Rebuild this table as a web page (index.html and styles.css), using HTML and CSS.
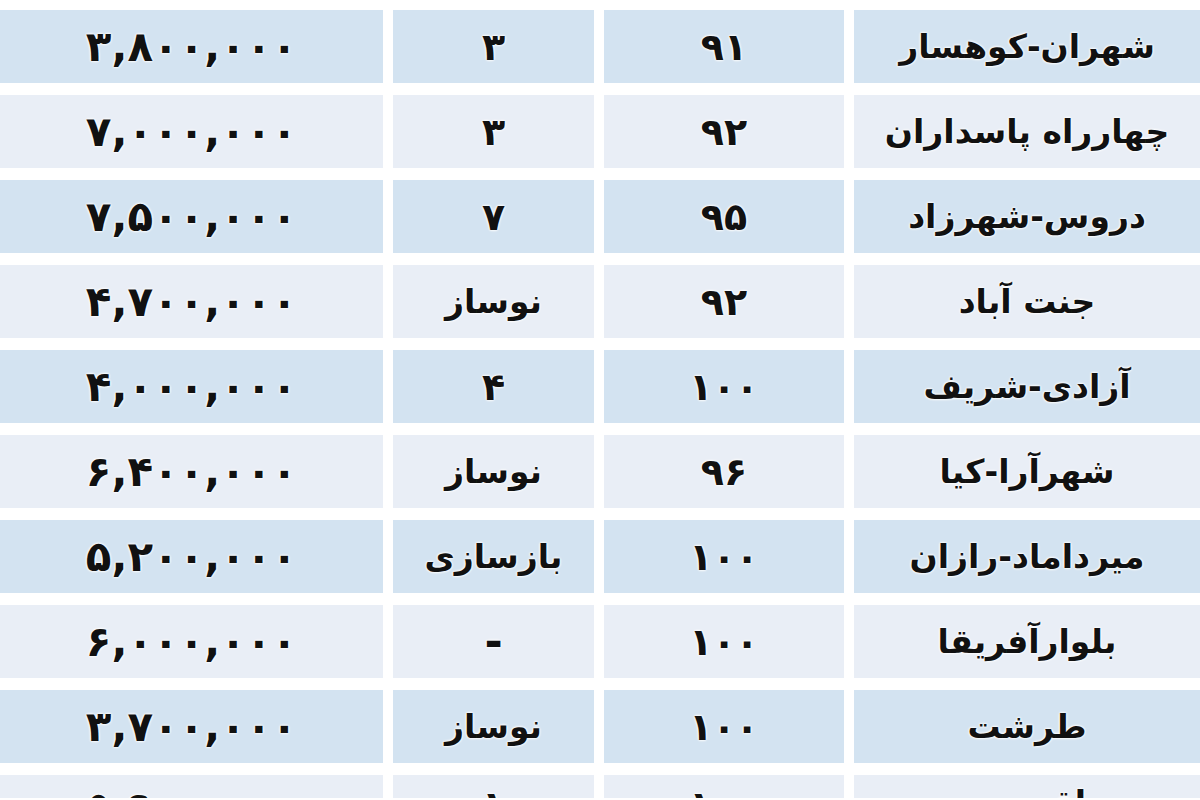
FILE: index.html
```html
<!DOCTYPE html>
<html lang="fa">
<head>
<meta charset="utf-8">
<link rel="stylesheet" href="styles.css">
</head>
<body>
<div class="table">
  <div class="row dark"><div class="cell num price">۳,۸۰۰,۰۰۰</div><div class="cell num">۳</div><div class="cell num">۹۱</div><div class="cell">شهران-کوهسار</div></div>
  <div class="row light"><div class="cell num price">۷,۰۰۰,۰۰۰</div><div class="cell num">۳</div><div class="cell num">۹۲</div><div class="cell">چهارراه پاسداران</div></div>
  <div class="row dark"><div class="cell num price">۷,۵۰۰,۰۰۰</div><div class="cell num">۷</div><div class="cell num">۹۵</div><div class="cell">دروس-شهرزاد</div></div>
  <div class="row light"><div class="cell num price">۴,۷۰۰,۰۰۰</div><div class="cell">نوساز</div><div class="cell num">۹۲</div><div class="cell">جنت آباد</div></div>
  <div class="row dark"><div class="cell num price">۴,۰۰۰,۰۰۰</div><div class="cell num">۴</div><div class="cell num">۱۰۰</div><div class="cell">آزادی-شریف</div></div>
  <div class="row light"><div class="cell num price">۶,۴۰۰,۰۰۰</div><div class="cell">نوساز</div><div class="cell num">۹۶</div><div class="cell">شهرآرا-کیا</div></div>
  <div class="row dark"><div class="cell num price">۵,۲۰۰,۰۰۰</div><div class="cell">بازسازی</div><div class="cell num">۱۰۰</div><div class="cell">میرداماد-رازان</div></div>
  <div class="row light"><div class="cell num price">۶,۰۰۰,۰۰۰</div><div class="cell num dash">-</div><div class="cell num">۱۰۰</div><div class="cell">بلوارآفریقا</div></div>
  <div class="row dark"><div class="cell num price">۳,۷۰۰,۰۰۰</div><div class="cell">نوساز</div><div class="cell num">۱۰۰</div><div class="cell">طرشت</div></div>
  <div class="row light partial"><div class="cell num price">۵,۹۰۰,۰۰۰</div><div class="cell num">۱</div><div class="cell num">۱۰۰</div><div class="cell">اقدسیه</div></div>
</div>
</body>
</html>
```
FILE: styles.css
```css
html, body {
  margin: 0;
  padding: 0;
  background: #ffffff;
  overflow: hidden;
}
body {
  width: 1200px;
  height: 800px;
  font-family: "DejaVu Sans", "Noto Sans", sans-serif;
}
.table {
  display: flex;
  flex-direction: column;
  gap: 12px;
  padding-top: 10px;
  height: 790px;
  overflow: hidden;
}
.row {
  display: grid;
  grid-template-columns: 383px 201px 240px 1fr;
  column-gap: 10px;
  height: 73px;
  flex: none;
}
.row.partial {
  height: 23px;
  overflow: hidden;
}
.row.partial .cell {
  align-items: flex-start;
  padding-top: 8px;
  height: 15px;
  overflow: visible;
}
.cell {
  display: flex;
  align-items: center;
  justify-content: center;
  direction: rtl;
  font-size: 33px;
  font-weight: bold;
  color: #111111;
  text-shadow: 0 0 3px #ffffff, 0 0 3px #ffffff, 0 0 2px #ffffff;
  white-space: nowrap;
}
.cell.num {
  font-size: 38px;
}
.cell.price {
  font-size: 42px;
}
.cell.dash {
  font-size: 44px;
}
.dark .cell {
  background: #d3e3f1;
}
.light .cell {
  background: #e9eef6;
}
```
